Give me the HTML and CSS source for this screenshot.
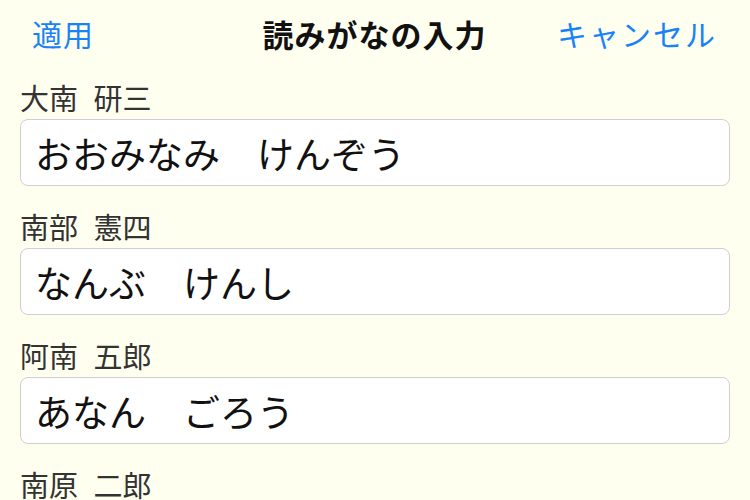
FILE: index.html
```html
<!DOCTYPE html>
<html lang="ja">
<head>
    <meta charset="UTF-8">
    <meta name="viewport" content="width=device-width, initial-scale=1.0">
    <title>読みがなの入力</title>
    <link rel="stylesheet" href="styles.css">
</head>
<body>
    <header class="nav-bar">
        <button type="button" class="nav-btn apply">適用</button>
        <h1 class="nav-title">読みがなの入力</h1>
        <button type="button" class="nav-btn cancel">キャンセル</button>
    </header>
    <form class="yomi-list">
        <div class="field">
            <label for="yomi1">大南 研三</label>
            <input type="text" id="yomi1" value="おおみなみ　けんぞう">
        </div>
        <div class="field">
            <label for="yomi2">南部 憲四</label>
            <input type="text" id="yomi2" value="なんぶ　けんし">
        </div>
        <div class="field">
            <label for="yomi3">阿南 五郎</label>
            <input type="text" id="yomi3" value="あなん　ごろう">
        </div>
        <div class="field">
            <label for="yomi4">南原 二郎</label>
            <input type="text" id="yomi4" value="なんばら　じろう">
        </div>
    </form>
</body>
</html>
```

FILE: styles.css
```css
body {
    font-family: "Noto Sans CJK JP", "Noto Sans", sans-serif;
    margin: 0;
    padding: 0;
    background-color: #fffff0;
    overflow: hidden;
}
.nav-bar {
    display: grid;
    grid-template-columns: 1fr auto 1fr;
    align-items: center;
    height: 66px;
    padding: 0 33px 2px 32px;
}
.nav-btn {
    background: none;
    border: none;
    padding: 0;
    font-family: inherit;
    font-size: 30px;
    letter-spacing: 1px;
    color: #1a82f8;
    cursor: pointer;
}
.apply {
    justify-self: start;
}
.cancel {
    justify-self: end;
    letter-spacing: 2px;
}
.nav-title {
    margin: 0;
    font-size: 31px;
    font-weight: bold;
    letter-spacing: 1px;
    color: #111;
}
.yomi-list {
    display: flex;
    flex-direction: column;
    gap: 23px;
    padding: 12px 20px 0 20px;
}
.field label {
    display: block;
    height: 34px;
    line-height: 34px;
    font-size: 29px;
    word-spacing: 9px;
    color: #333;
    margin-bottom: 5px;
}
.field input {
    box-sizing: border-box;
    width: 100%;
    height: 67px;
    padding: 0 14px;
    border: 1px solid #cfcfcf;
    border-radius: 8px;
    background: #fff;
    font-family: inherit;
    font-size: 37px;
    color: #111;
    outline: none;
}
```
